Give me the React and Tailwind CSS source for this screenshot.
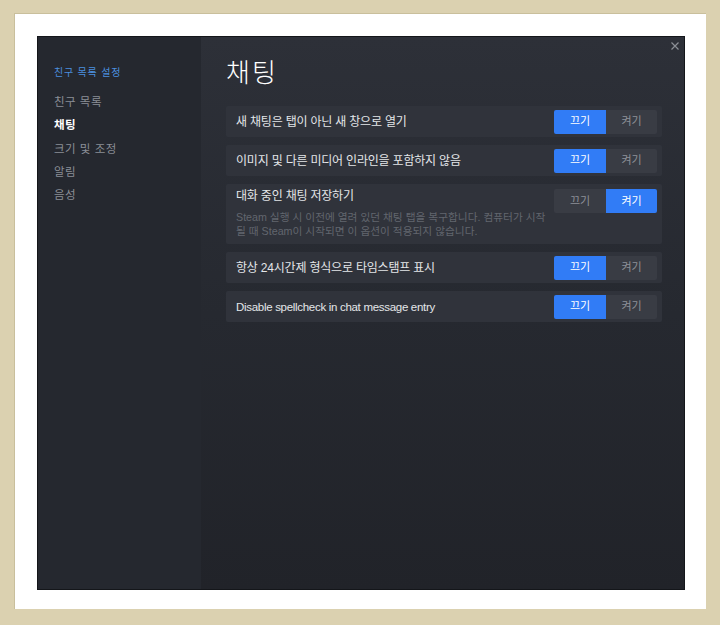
import React from 'react';

const font = { fontFamily: '"Liberation Sans", "Noto Sans CJK KR", sans-serif' };

const menu = [
    { label: '친구 목록', active: false },
    { label: '채팅', active: true },
    { label: '크기 및 조정', active: false },
    { label: '알림', active: false },
    { label: '음성', active: false },
];

const rows = [
    { title: '새 채팅은 탭이 아닌 새 창으로 열기', on: false },
    { title: '이미지 및 다른 미디어 인라인을 포함하지 않음', on: false },
    {
        title: '대화 중인 채팅 저장하기',
        on: true,
        desc: ['Steam 실행 시 이전에 열려 있던 채팅 탭을 복구합니다. 컴퓨터가 시작', '될 때 Steam이 시작되면 이 옵션이 적용되지 않습니다.'],
    },
    { title: '항상 24시간제 형식으로 타임스탬프 표시', on: false },
    { title: 'Disable spellcheck in chat message entry', on: false, latin: true },
];

function Toggle({ on }) {
    return (
        <div className="flex shrink-0 rounded-[2px] overflow-hidden">
            <div className={`w-[52px] h-[24px] flex items-center justify-center text-[11px] ${on ? 'bg-[#393c44] text-[#8d9098]' : 'bg-[#317cf6] text-white'}`}>끄기</div>
            <div className={`w-[51px] h-[24px] flex items-center justify-center text-[11px] ${on ? 'bg-[#317cf6] text-white' : 'bg-[#393c44] text-[#8d9098]'}`}>켜기</div>
        </div>
    );
}

function Row({ title, on, desc, latin }) {
    const titleCls = latin
        ? 'text-[11.5px] tracking-[-0.3px] leading-[16px] text-[#e4e6e9]'
        : 'text-[12px] tracking-[-0.2px] leading-[16px] text-[#e4e6e9]';
    if (desc) {
        return (
            <div className="flex items-start justify-between bg-[#30333b] rounded-[2px] pl-[10px] pr-[5px] pt-[5px] pb-[6px]">
                <div className="flex flex-col">
                    <p className={`${titleCls} mt-[-1px]`}>{title}</p>
                    <p className="text-[10.7px] leading-[14px] text-[#62666e] mt-[6px]">
                        {desc[0]}
                        <br />
                        {desc[1]}
                    </p>
                </div>
                <Toggle on={on} />
            </div>
        );
    }
    return (
        <div className="flex items-center justify-between h-[31px] bg-[#30333b] rounded-[2px] pl-[10px] pr-[5px]">
            <p className={titleCls}>{title}</p>
            <Toggle on={on} />
        </div>
    );
}

export default function App() {
    return (
        <div className="w-[720px] h-[625px] bg-[#dbd1b0] pl-[14px] pt-[13px] pr-[14px] pb-[16px] flex" style={font}>
            <div className="flex-1 flex bg-white pl-[22px] pt-[22px] pr-[21px] pb-[19px] border-l border-t border-[#c9bf9c]">
                <div className="flex-1 flex border border-[#14161a]">
                    {/* sidebar */}
                    <div className="w-[163px] bg-[#25282f] pl-[16px] pt-[28px]">
                        <p className="text-[10px] tracking-[0.8px] leading-[16px] text-[#4b8fdf]">친구 목록 설정</p>
                        <div className="mt-[10px] flex flex-col">
                            {menu.map((m) => (
                                <p key={m.label} className={`text-[11.5px] tracking-[0.5px] leading-[23.3px] ${m.active ? 'text-white font-bold' : 'text-[#8a8e96]'}`}>{m.label}</p>
                            ))}
                        </div>
                    </div>
                    {/* content */}
                    <div className="flex-1 relative bg-gradient-to-b from-[#2d3038] via-[#262930] to-[#212329] pl-[25px] pr-[22px] pt-[20px]">
                        <svg className="absolute right-[5px] top-[5px]" width="8" height="8" viewBox="0 0 8 8">
                            <path d="M0.5 0.5 L7.5 7.5 M7.5 0.5 L0.5 7.5" stroke="#8b8f96" strokeWidth="1.2" />
                        </svg>
                        <h1 className="text-[26px] leading-[32px] tracking-[2px] text-white font-light">채팅</h1>
                        <div className="mt-[17px] flex flex-col gap-2">
                            {rows.map((r) => (
                                <Row key={r.title} {...r} />
                            ))}
                        </div>
                    </div>
                </div>
            </div>
        </div>
    );
}
